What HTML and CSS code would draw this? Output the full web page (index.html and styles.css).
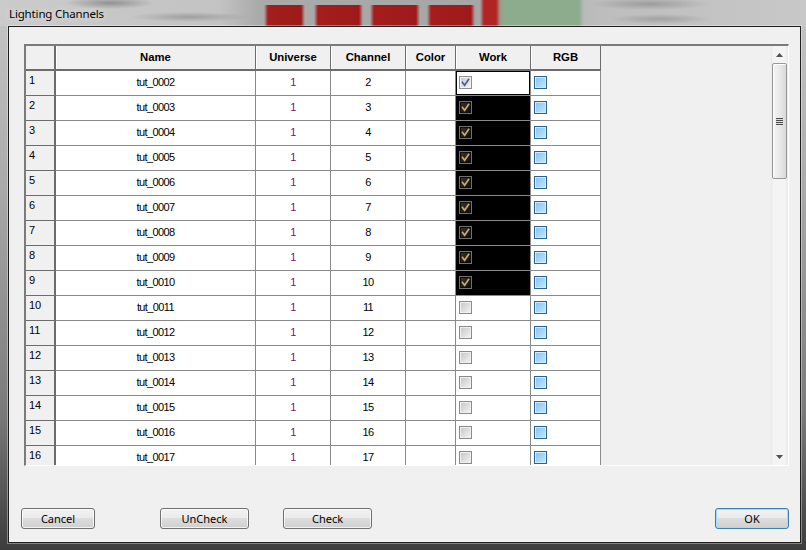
FILE: index.html
```html
<!DOCTYPE html>
<html>
<head>
<meta charset="utf-8">
<link rel="stylesheet" href="styles.css">
</head>
<body>
<div class="window">
  <div class="titlebar"><span class="title">Lighting Channels</span></div>
  <div class="frame">
    <div class="client">
      <div class="grid">
        <div class="table">
          <div class="row head">
            <div class="c rh"></div><div class="c">Name</div><div class="c">Universe</div><div class="c">Channel</div><div class="c">Color</div><div class="c">Work</div><div class="c">RGB</div>
          </div>
          <div class="row"><div class="c rh">1</div><div class="c">tut_0002</div><div class="c uni">1</div><div class="c">2</div><div class="c"></div><div class="c chk focus"><span class="cb on"><svg viewBox="0 0 11 11"><path d="M2.5 5.5L4.6 8.3 8.6 2.4"/></svg></span></div><div class="c chk"><span class="cb blue"></span></div></div>
          <div class="row"><div class="c rh">2</div><div class="c">tut_0003</div><div class="c uni">1</div><div class="c">3</div><div class="c"></div><div class="c chk sel"><span class="cb inv"><svg viewBox="0 0 11 11"><path d="M2.5 5.5L4.6 8.3 8.6 2.4"/></svg></span></div><div class="c chk"><span class="cb blue"></span></div></div>
          <div class="row"><div class="c rh">3</div><div class="c">tut_0004</div><div class="c uni">1</div><div class="c">4</div><div class="c"></div><div class="c chk sel"><span class="cb inv"><svg viewBox="0 0 11 11"><path d="M2.5 5.5L4.6 8.3 8.6 2.4"/></svg></span></div><div class="c chk"><span class="cb blue"></span></div></div>
          <div class="row"><div class="c rh">4</div><div class="c">tut_0005</div><div class="c uni">1</div><div class="c">5</div><div class="c"></div><div class="c chk sel"><span class="cb inv"><svg viewBox="0 0 11 11"><path d="M2.5 5.5L4.6 8.3 8.6 2.4"/></svg></span></div><div class="c chk"><span class="cb blue"></span></div></div>
          <div class="row"><div class="c rh">5</div><div class="c">tut_0006</div><div class="c uni">1</div><div class="c">6</div><div class="c"></div><div class="c chk sel"><span class="cb inv"><svg viewBox="0 0 11 11"><path d="M2.5 5.5L4.6 8.3 8.6 2.4"/></svg></span></div><div class="c chk"><span class="cb blue"></span></div></div>
          <div class="row"><div class="c rh">6</div><div class="c">tut_0007</div><div class="c uni">1</div><div class="c">7</div><div class="c"></div><div class="c chk sel"><span class="cb inv"><svg viewBox="0 0 11 11"><path d="M2.5 5.5L4.6 8.3 8.6 2.4"/></svg></span></div><div class="c chk"><span class="cb blue"></span></div></div>
          <div class="row"><div class="c rh">7</div><div class="c">tut_0008</div><div class="c uni">1</div><div class="c">8</div><div class="c"></div><div class="c chk sel"><span class="cb inv"><svg viewBox="0 0 11 11"><path d="M2.5 5.5L4.6 8.3 8.6 2.4"/></svg></span></div><div class="c chk"><span class="cb blue"></span></div></div>
          <div class="row"><div class="c rh">8</div><div class="c">tut_0009</div><div class="c uni">1</div><div class="c">9</div><div class="c"></div><div class="c chk sel"><span class="cb inv"><svg viewBox="0 0 11 11"><path d="M2.5 5.5L4.6 8.3 8.6 2.4"/></svg></span></div><div class="c chk"><span class="cb blue"></span></div></div>
          <div class="row"><div class="c rh">9</div><div class="c">tut_0010</div><div class="c uni">1</div><div class="c">10</div><div class="c"></div><div class="c chk sel"><span class="cb inv"><svg viewBox="0 0 11 11"><path d="M2.5 5.5L4.6 8.3 8.6 2.4"/></svg></span></div><div class="c chk"><span class="cb blue"></span></div></div>
          <div class="row"><div class="c rh">10</div><div class="c">tut_0011</div><div class="c uni">1</div><div class="c">11</div><div class="c"></div><div class="c chk"><span class="cb off"></span></div><div class="c chk"><span class="cb blue"></span></div></div>
          <div class="row"><div class="c rh">11</div><div class="c">tut_0012</div><div class="c uni">1</div><div class="c">12</div><div class="c"></div><div class="c chk"><span class="cb off"></span></div><div class="c chk"><span class="cb blue"></span></div></div>
          <div class="row"><div class="c rh">12</div><div class="c">tut_0013</div><div class="c uni">1</div><div class="c">13</div><div class="c"></div><div class="c chk"><span class="cb off"></span></div><div class="c chk"><span class="cb blue"></span></div></div>
          <div class="row"><div class="c rh">13</div><div class="c">tut_0014</div><div class="c uni">1</div><div class="c">14</div><div class="c"></div><div class="c chk"><span class="cb off"></span></div><div class="c chk"><span class="cb blue"></span></div></div>
          <div class="row"><div class="c rh">14</div><div class="c">tut_0015</div><div class="c uni">1</div><div class="c">15</div><div class="c"></div><div class="c chk"><span class="cb off"></span></div><div class="c chk"><span class="cb blue"></span></div></div>
          <div class="row"><div class="c rh">15</div><div class="c">tut_0016</div><div class="c uni">1</div><div class="c">16</div><div class="c"></div><div class="c chk"><span class="cb off"></span></div><div class="c chk"><span class="cb blue"></span></div></div>
          <div class="row"><div class="c rh">16</div><div class="c">tut_0017</div><div class="c uni">1</div><div class="c">17</div><div class="c"></div><div class="c chk"><span class="cb off"></span></div><div class="c chk"><span class="cb blue"></span></div></div>
        </div>
        <div class="vscroll">
          <div class="sbtn"><svg width="7" height="4" viewBox="0 0 7 4"><path d="M3.5 0L7 4H0z"/></svg></div>
          <div class="track">
            <div class="thumb"><span class="grip"></span></div>
          </div>
          <div class="sbtn"><svg width="7" height="4" viewBox="0 0 7 4"><path d="M0 0H7L3.5 4z"/></svg></div>
        </div>
      </div>
      <div class="buttons">
        <button class="btn w73">Cancel</button>
        <button class="btn w88 uncheck">UnCheck</button>
        <button class="btn w88 check">Check</button>
        <button class="btn w73 ok">OK</button>
      </div>
    </div>
  </div>
</div>
</body>
</html>
```

FILE: styles.css
```css
html, body {
  margin: 0;
  padding: 0;
}
body {
  width: 806px;
  height: 550px;
  overflow: hidden;
}
.window {
  width: 806px;
  height: 550px;
  display: flex;
  flex-direction: column;
  background: linear-gradient(to bottom, #c6c6c6 0, #a9a9a9 35%, #7a7a7a 75%, #3c3c3c 100%);
}
.titlebar {
  height: 26px;
  flex: none;
  display: flex;
  align-items: center;
  padding-left: 9px;
  background:
    radial-gradient(ellipse 45px 6px at 110px 3px, rgba(80,80,80,.45), rgba(80,80,80,0)),
    radial-gradient(ellipse 60px 5px at 190px 17px, rgba(90,90,90,.35), rgba(90,90,90,0)),
    radial-gradient(ellipse 60px 6px at 650px 4px, rgba(90,90,90,.35), rgba(90,90,90,0)),
    radial-gradient(ellipse 50px 5px at 660px 19px, rgba(90,90,90,.3), rgba(90,90,90,0)),
    linear-gradient(to right, transparent 264px, #a51d1d 268px, #9e1a1a 301px, transparent 305px, transparent 314px, #a51d1d 318px, #9e1a1a 359px, transparent 363px, transparent 370px, #a51d1d 374px, #9e1a1a 416px, transparent 420px, transparent 427px, #a51d1d 431px, #9e1a1a 471px, transparent 475px) 0 5px / 100% 21px no-repeat,
    linear-gradient(to right, transparent 480px, #b02424 484px, #b02424 496px, #a09486 500px, #8dab8d 504px, #8dab8d 579px, transparent 584px),
    linear-gradient(to right, #cbcbcb 0, #c3c3c3 220px, #aaaaaa 258px, #a6a6a6 478px, #bdbdbd 600px, #c8c8c8 806px);
}
.title {
  font-family: "Noto Sans", "Liberation Sans", sans-serif;
  font-size: 11.5px;
  letter-spacing: -0.15px;
  color: #000;
  text-shadow: 0 0 6px rgba(255,255,255,.8);
}
.frame {
  flex: 1;
  display: flex;
  padding: 0 5px 7px 8px;
}
.client {
  flex: 1;
  display: flex;
  flex-direction: column;
  background: #f0f0f0;
  border: 1px solid #1f1f1f;
  box-shadow: 0 0 0 1px rgba(255,255,255,.35);
  padding: 17px 11px 13px 12px;
}
.grid {
  margin-left: 3px;
  height: 422px;
  box-sizing: border-box;
  display: flex;
  border-style: solid;
  border-width: 2px 1px 1px 2px;
  border-color: #7b7b7b #ffffff #ffffff #7b7b7b;
  background: #f0f0f0;
}
.table {
  flex: 1;
  overflow: hidden;
  font-family: "Liberation Sans", Arial, sans-serif;
  font-size: 11px;
  color: #000;
}
.row {
  display: grid;
  grid-template-columns: 30px 200px 75px 75px 50px 75px 70px;
  height: 25px;
}
.c {
  box-sizing: border-box;
  background: #fff;
  border-right: 1px solid #8a8a8a;
  border-bottom: 1px solid #8a8a8a;
  display: flex;
  align-items: center;
  justify-content: center;
  padding-bottom: 2px;
  letter-spacing: -0.6px;
  white-space: nowrap;
}
.c.rh {
  background: #f0f0f0;
  border-right: 2px solid #6c6c6c;
  border-bottom: 1px solid #6c6c6c;
  justify-content: flex-start;
  align-items: flex-start;
  padding: 3px 0 0 3px;
  letter-spacing: 0;
}
.c.uni {
  color: #7c0c78;
}
.row.head {
  height: 25px;
}
.head .c {
  background: #f0f0f0;
  font-weight: bold;
  font-size: 11.3px;
  letter-spacing: 0;
  border-right: 1px solid #6c6c6c;
  border-bottom: 2px solid #6c6c6c;
  box-shadow: inset 1px 0 #ffffff;
  padding-bottom: 1px;
}
.head .c.rh {
  border-right: 2px solid #6c6c6c;
  box-shadow: none;
}
.c.chk {
  justify-content: flex-start;
  align-items: flex-start;
  padding: 5px 0 0 3px;
}
.c.focus {
  box-shadow: inset 0 0 0 1px #000;
}
.c.sel {
  background: #000;
}
.cb {
  width: 13px;
  height: 13px;
  box-sizing: border-box;
  display: block;
  border: 1px solid #8e8f8f;
}
.cb svg {
  display: block;
  width: 11px;
  height: 11px;
}
.cb path {
  fill: none;
  stroke-width: 1.7;
  stroke-linecap: square;
}
.cb.on {
  background: linear-gradient(135deg, #c5c8ce, #f4f4f4);
  box-shadow: inset 0 0 0 1px #f2f2f2;
}
.cb.on path { stroke: #4b5f95; }
.cb.inv {
  border-color: #727170;
  background: linear-gradient(135deg, #3a3730, #0a0a0a);
  box-shadow: inset 0 0 0 1px #0d0d0d;
}
.cb.inv path { stroke: #c8ab68; }
.cb.off {
  border-color: #8a8a8a;
  background: linear-gradient(135deg, #c4c4c4, #f5f5f5);
  box-shadow: inset 0 0 0 1px #f0f0f0;
}
.cb.blue {
  border-color: #2c628b;
  background: linear-gradient(135deg, #7fc2f3, #c8e7fc);
  box-shadow: inset 0 0 0 1px #d0ecfd;
}
.vscroll {
  width: 17px;
  flex: none;
  display: flex;
  flex-direction: column;
  background: linear-gradient(to right, #e6e6e6 0, #f4f4f4 2px, #f4f4f4 14px, #e8e8e8 17px);
}
.sbtn {
  height: 17px;
  flex: none;
  display: flex;
  align-items: center;
  justify-content: center;
}
.sbtn path {
  fill: #505050;
}
.track {
  flex: 1;
}
.thumb {
  margin: 0 0 0 1px;
  width: 15px;
  height: 116px;
  box-sizing: border-box;
  border: 1px solid #979797;
  border-radius: 2px;
  background: linear-gradient(to right, #f4f4f4 0, #e9e9e9 50%, #d9d9d9 100%);
  box-shadow: inset 1px 1px 0 #fff;
  display: flex;
  align-items: center;
  justify-content: center;
}
.grip {
  width: 7px;
  height: 7px;
  background: repeating-linear-gradient(to bottom, #4d4d4d 0, #4d4d4d 1px, #dcdcdc 1px, #dcdcdc 2px);
}
.buttons {
  margin-top: 42px;
  display: flex;
  align-items: flex-start;
}
.btn {
  height: 21px;
  box-sizing: border-box;
  border: 1px solid #707070;
  border-radius: 3px;
  background: linear-gradient(to bottom, #f2f2f2 0, #ebebeb 45%, #dddddd 50%, #cfcfcf 100%);
  box-shadow: inset 0 0 0 1px rgba(255,255,255,.7);
  font-family: "Noto Sans", "Liberation Sans", sans-serif;
  font-size: 11px;
  color: #000;
  padding: 0;
  line-height: 17px;
}
.w73 { width: 74px; }
.w88 { width: 89px; }
.uncheck { margin-left: 65px; }
.check { margin-left: 34px; }
.ok {
  margin-left: auto;
  border-color: #3c7fb1;
  box-shadow: inset 0 0 0 1px #9fdcf8;
}
```
